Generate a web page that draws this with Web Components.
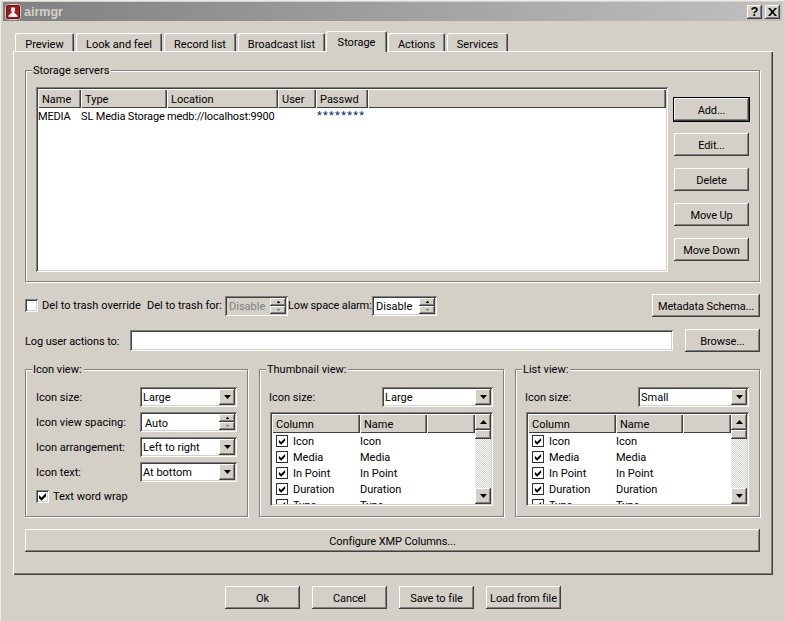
<!DOCTYPE html>
<html><head><meta charset="utf-8"><title>airmgr</title>
<style>
html,body{margin:0;padding:0;background:#d4d0c8;overflow:hidden}
body{font:11px Roboto,sans-serif;color:#000}
</style></head><body>
<win-dialog>
  <title-bar slot="title">airmgr</title-bar>
  <tab-strip>
    <tab-item style="width:59px">Preview</tab-item>
    <tab-item style="width:86px">Look and feel</tab-item>
    <tab-item style="width:72px">Record list</tab-item>
    <tab-item style="width:87px">Broadcast list</tab-item>
    <tab-item selected style="width:61px">Storage</tab-item>
    <tab-item style="width:57px">Actions</tab-item>
    <tab-item style="width:61px">Services</tab-item>
  </tab-strip>
  <tab-panel>
    <group-box label="Storage servers" style="height:212px">
      <h-row style="justify-content:space-between;align-items:flex-start">
        <server-table></server-table>
        <v-col style="padding-top:11px;gap:12px">
          <push-button default>Add...</push-button>
          <push-button>Edit...</push-button>
          <push-button>Delete</push-button>
          <push-button>Move Up</push-button>
          <push-button>Move Down</push-button>
        </v-col>
      </h-row>
    </group-box>
    <h-row style="margin-top:12px;height:23px;align-items:center">
      <check-box style="width:122px;letter-spacing:.05px">Del to trash override</check-box>
      <span-label style="width:78px">Del to trash for:</span-label>
      <spin-box disabled value="Disable" style="width:63px"></spin-box>
      <span-label style="width:84px;letter-spacing:-.15px">Low space alarm:</span-label>
      <spin-box value="Disable" style="width:65px"></spin-box>
      <push-button style="width:108px;margin-left:auto">Metadata Schema...</push-button>
    </h-row>
    <h-row style="margin-top:12px;height:23px;align-items:center">
      <span-label style="width:105px;padding-top:2px;letter-spacing:-.1px">Log user actions to:</span-label>
      <line-edit style="flex:1;margin-right:12px"></line-edit>
      <push-button>Browse...</push-button>
    </h-row>
    <h-row style="margin-top:17px;justify-content:space-between">
      <group-box label="Icon view:" style="width:223px;height:148px">
        <form-grid>
          <span-label>Icon size:</span-label><combo-box>Large</combo-box>
          <span-label>Icon view spacing:</span-label><spin-box auto value="Auto"></spin-box>
          <span-label>Icon arrangement:</span-label><combo-box>Left to right</combo-box>
          <span-label>Icon text:</span-label><combo-box>At bottom</combo-box>
        </form-grid>
        <check-box checked style="margin-top:7px">Text word wrap</check-box>
      </group-box>
      <group-box label="Thumbnail view:" style="width:245px;height:148px">
        <h-row style="justify-content:space-between;align-items:center;margin:1px 0 0 -1px">
          <span-label>Icon size:</span-label><combo-box style="width:111px">Large</combo-box>
        </h-row>
        <col-list></col-list>
      </group-box>
      <group-box label="List view:" style="width:245px;height:148px">
        <h-row style="justify-content:space-between;align-items:center;margin:1px 0 0 -1px">
          <span-label>Icon size:</span-label><combo-box style="width:111px">Small</combo-box>
        </h-row>
        <col-list></col-list>
      </group-box>
    </h-row>
    <push-button style="width:auto;margin-top:12px">Configure XMP Columns...</push-button>
  </tab-panel>
  <h-row style="margin-top:11px;padding-left:212px;gap:12px">
    <push-button>Ok</push-button>
    <push-button>Cancel</push-button>
    <push-button>Save to file</push-button>
    <push-button>Load from file</push-button>
  </h-row>
</win-dialog>
<script>
const raised='inset -1px -1px 0 #404040,inset 1px 1px 0 #fff,inset -2px -2px 0 #808080';
const sunken='inset 1px 1px 0 #808080,inset -1px -1px 0 #fff,inset 2px 2px 0 #404040,inset -2px -2px 0 #d4d0c8';
const def=(name,css,html,init)=>{
  const t=document.createElement('template');
  t.innerHTML=`<style>${css}</style>${html}`;
  customElements.define(name,class extends HTMLElement{
    constructor(){super();this.attachShadow({mode:'open'}).appendChild(t.content.cloneNode(true));}
    connectedCallback(){if(init)init(this,this.shadowRoot);}
  });
};
const arrow=(dir,c='#000')=>`<svg width="7" height="4" viewBox="0 0 7 4" style="display:block">${dir==='up'?`<path d="M3.500 0 7 4H0z" fill="${c}"/>`:`<path d="M0 0h7L3.500 4z" fill="${c}"/>`}</svg>`;
const tick=`<svg class="tk" width="9" height="9" viewBox="0 0 9 9"><path d="M1 3 3.500 5.500 8 1V4.200L3.500 8.700 1 6.200z" fill="#000"/></svg>`;

def('win-dialog',`:host{display:block;width:785px;height:621px;box-sizing:border-box;padding:2px 3px 0 3px;box-shadow:inset 1px 1px 0 #efede8}
  .body{padding:10px 9px 0 10px}`,`<slot name="title"></slot><div class="body"><slot></slot></div>`);

def('title-bar',`:host{display:flex;align-items:center;height:19px;background:linear-gradient(90deg,#808080,#c0c0c0);color:#d4d0c8;font:bold 12.5px "Liberation Sans",sans-serif;padding:0 2px 0 2px}
  .logo{width:16px;height:16px;margin-right:3px;flex:none}
  .txt{flex:1;line-height:18px;white-space:nowrap}
  .b{width:15px;height:14px;background:#d4d0c8;box-shadow:${raised};color:#000;font:bold 13px "Liberation Sans",sans-serif;display:flex;align-items:center;justify-content:center;margin-left:3px;flex:none}`,
  `<svg class="logo" viewBox="0 0 16 16"><rect x=".5" y=".5" width="15" height="15" rx="3" fill="#9c1c20" stroke="#e3c9c6"/><rect x="1.500" y="1.500" width="13" height="13" rx="2" fill="none" stroke="#5c1014"/><path d="M6 3.500h4v2.500l-.8 2.500L12.500 11.500v1.500h-9v-1.500L6.800 8.500 6 6z" fill="#f4eeee"/></svg><span class="txt"><slot></slot></span><span class="b">?</span><span class="b"><svg width="9" height="8" viewBox="0 0 9 8"><path d="M0 0h2.200L4.500 2.700 6.800 0H9L5.600 4 9 8H6.800L4.500 5.300 2.200 8H0l3.400-4z"/></svg></span>`);

def('tab-strip',`:host{display:flex;align-items:flex-end;padding-left:2px;height:20px;gap:2px;position:relative;z-index:1}`,`<slot></slot>`);
def('tab-item',`:host{display:flex;align-items:center;justify-content:center;box-sizing:border-box;height:18px;background:#d4d0c8;border-radius:2px 2px 0 0;box-shadow:inset 1px 1px 0 #fff,inset -1px 0 0 #404040,inset -2px 0 0 #808080;padding-top:5px}
  :host([selected]){height:21px;margin-bottom:-1px;margin-left:-1px;margin-right:-1px;padding-bottom:0;padding-top:1px}`,`<slot></slot>`);
def('tab-panel',`:host{display:block;box-sizing:border-box;width:760px;height:524px;padding:19px 13px 0 12px;box-shadow:inset 1px 1px 0 #fff,inset -1px -1px 0 #404040,inset -2px -2px 0 #808080}`,`<slot></slot>`);
def('h-row',`:host{display:flex}`,`<slot></slot>`);
def('v-col',`:host{display:flex;flex-direction:column}`,`<slot></slot>`);
def('span-label',`:host{display:block;white-space:nowrap;flex:none}`,`<slot></slot>`);
def('form-grid',`:host{display:grid;grid-template-columns:1fr 97px;row-gap:5px;align-items:center;height:95px;margin-top:1px}`,`<slot></slot>`);

def('group-box',`:host{display:block;box-sizing:border-box;border:1px solid #808080;box-shadow:1px 1px 0 #fff,inset 1px 1px 0 #fff;padding:0 10px}
  .l{width:fit-content;background:#d4d0c8;margin:-8px 0 0 -4px;padding:0 2px 0 1px;height:16px;line-height:15px;white-space:nowrap}
  .c{padding-top:8px}`,`<div class="l"></div><div class="c"><slot></slot></div>`,(h,s)=>{s.querySelector('.l').textContent=h.getAttribute('label');});

def('push-button',`:host{display:flex;align-items:center;justify-content:center;box-sizing:border-box;width:75px;height:23px;padding-top:2px;background:#d4d0c8;box-shadow:${raised};white-space:nowrap;flex:none;text-align:center;letter-spacing:-.1px}
  :host([default]){box-shadow:0 0 0 1px #000,${raised}}`,`<slot></slot>`);

def('check-box',`:host{display:flex;align-items:center;white-space:nowrap;flex:none;height:14px}
  .b{width:13px;height:13px;box-sizing:border-box;background:#fff;box-shadow:${sunken};margin-right:4px;display:flex;align-items:center;justify-content:center;flex:none}
  .tk{display:none}:host([checked]) .tk{display:block}`,`<span class="b">${tick}</span><slot></slot>`);

def('line-edit',`:host{display:block;height:21px;background:#fff;box-shadow:${sunken}}`,``);

def('combo-box',`:host{display:flex;box-sizing:border-box;height:20px;background:#fff;box-shadow:${sunken};padding:2px;line-height:18px;flex:none}
  .t{flex:1;padding-left:1px;overflow:hidden;white-space:nowrap}
  .a{width:16px;background:#d4d0c8;box-shadow:${raised};display:flex;align-items:center;justify-content:center}`,`<span class="t"><slot></slot></span><span class="a">${arrow('down')}</span>`);

def('spin-box',`:host{display:flex;box-sizing:border-box;height:20px;background:#fff;box-shadow:${sunken};padding:2px;line-height:18px;flex:none}
  :host([disabled]){background:#d4d0c8;color:#808080}
  :host([auto]) .t{padding-left:3px;line-height:19px}
  .t{flex:1;padding-left:2px;overflow:hidden;white-space:nowrap}
  .s{width:16px;display:flex;flex-direction:column}
  .u{flex:1;background:#d4d0c8;box-shadow:${raised};display:flex;align-items:center;justify-content:center}
  .u svg{transform:scale(.6)}`,`<span class="t"></span><span class="s"><span class="u">${arrow('up')}</span><span class="u">${arrow('down','#808080')}</span></span>`,(h,s)=>{s.querySelector('.t').textContent=h.getAttribute('value');});

def('list-head',`:host{display:block;box-sizing:border-box;height:19px;line-height:18px;padding:2px 0 0 4px;background:#d4d0c8;box-shadow:inset 1px 1px 0 #fff,inset -1px -1px 0 #404040,inset -2px -1px 0 #808080;white-space:nowrap;overflow:hidden;flex:none}`,`<slot></slot>`);

def('server-table',`:host{display:block;box-sizing:border-box;width:632px;height:185px;background:#fff;box-shadow:${sunken};padding:2px;flex:none}
  .h{display:flex;background:#d4d0c8}
  .r{display:grid;grid-template-columns:43px 86px 150px 1fr;height:16px;line-height:16px;padding-top:1px;white-space:nowrap;letter-spacing:-.15px}
  .r .p{color:#0a246a;letter-spacing:1.3px;line-height:14px}`,
  `<div class="h"><list-head style="width:43px">Name</list-head><list-head style="width:86px">Type</list-head><list-head style="width:111px">Location</list-head><list-head style="width:38px">User</list-head><list-head style="width:52px">Passwd</list-head><list-head style="flex:1"></list-head></div>
  <div class="r"><span>MEDIA</span><span>SL Media Storage</span><span>medb://localhost:9900</span><span class="p">********</span></div>`);

def('scroll-bar',`:host{display:flex;flex-direction:column;width:16px;height:90px;flex:none;background:repeating-conic-gradient(#fff 0 25%,#d4d0c8 0 50%) 0 0/2px 2px}
  .b{height:16px;flex:none;background:#d4d0c8;box-shadow:${raised};display:flex;align-items:center;justify-content:center}
  .th{height:9px;flex:none;background:#d4d0c8;box-shadow:${raised}}
  .sp{flex:1}`,`<div class="b">${arrow('up')}</div><div class="th"></div><div class="sp"></div><div class="b">${arrow('down')}</div>`);

def('col-list',`:host{display:block;box-sizing:border-box;width:223px;height:94px;margin:5px 0 0 0;background:#fff;box-shadow:${sunken};padding:2px;overflow:hidden}
  .w{display:flex;height:90px;overflow:hidden}
  .m{flex:1;min-width:0;overflow:hidden}
  .h{display:flex}
  .r{display:flex;align-items:center;height:16px;white-space:nowrap}
  .c{width:12px;height:12px;box-sizing:border-box;margin:0 5px 0 4px;border:1px solid #303030;display:flex;align-items:center;justify-content:center;flex:none}
  .c svg{display:block;width:8px;height:8px}
  .n1{width:67px}`,
  `<div class="w"><div class="m"><div class="h"><list-head style="width:88px">Column</list-head><list-head style="width:67px">Name</list-head><list-head style="flex:1"></list-head></div><div id="rows"></div></div><scroll-bar></scroll-bar></div>`,
  (h,s)=>{s.getElementById('rows').innerHTML=['Icon','Media','In Point','Duration','Type'].map(x=>`<div class="r"><span class="c">${tick}</span><span class="n1">${x}</span><span>${x}</span></div>`).join('');});
</script>
</body></html>
